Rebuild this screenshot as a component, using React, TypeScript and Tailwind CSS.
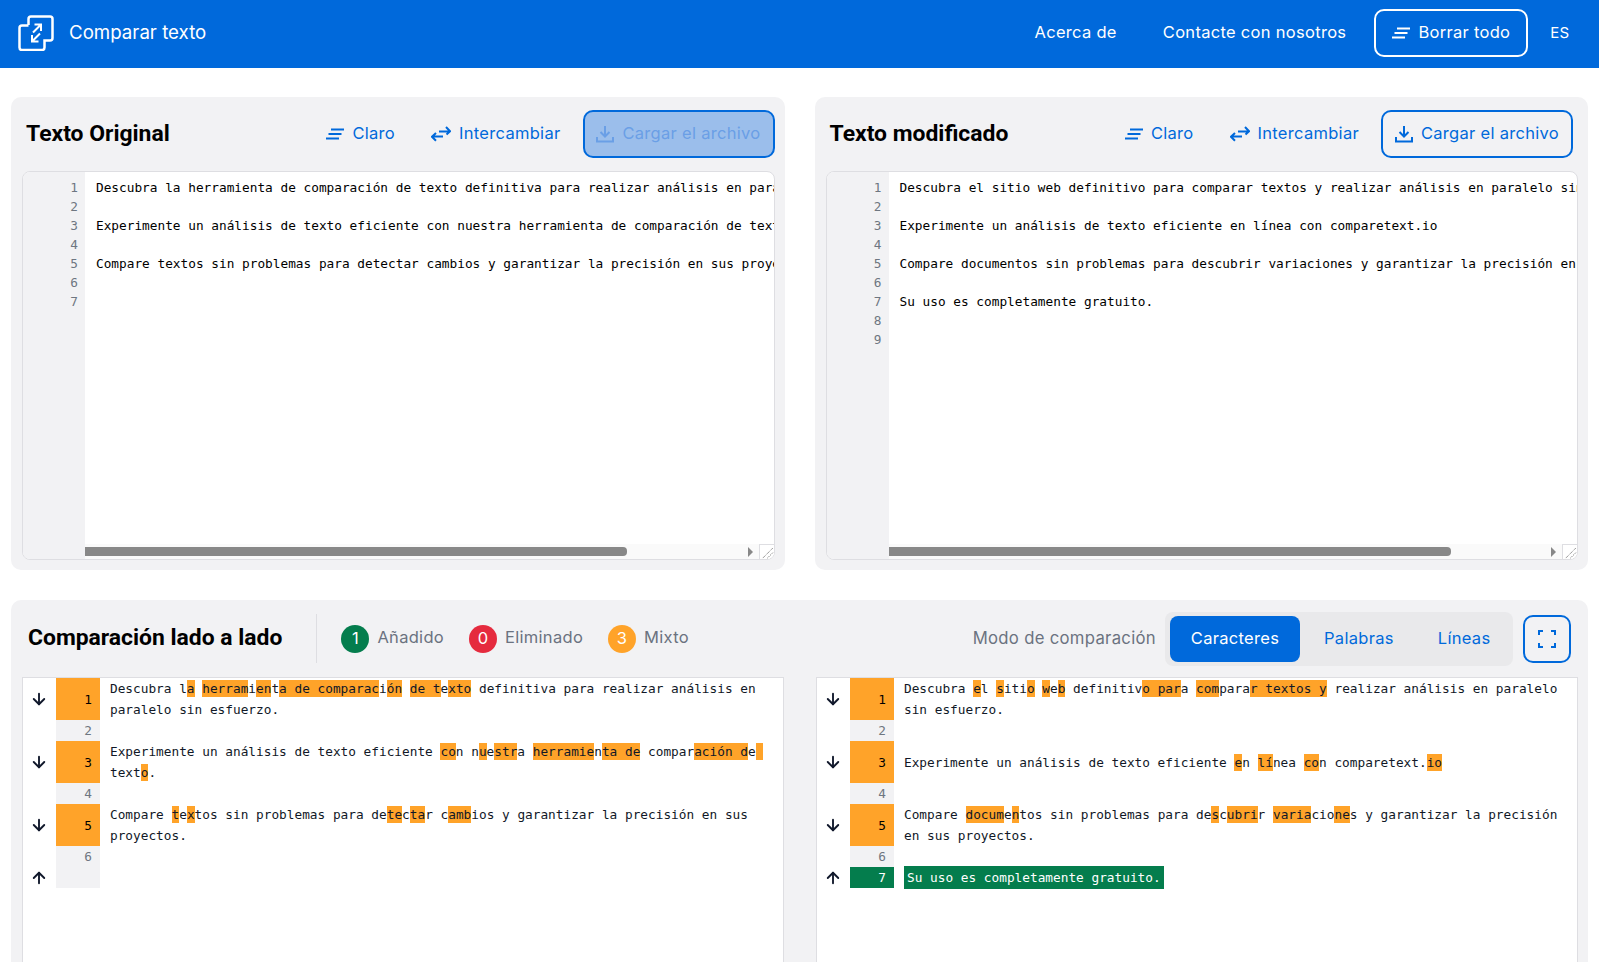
import React from 'react';
import { ArrowDown, ArrowUp } from 'lucide-react';

const mono = "font-['DejaVu_Sans_Mono',monospace]";

function LinesIcon({ className }: { className?: string }) {
  return (
    <svg viewBox="0 0 18 12" className={className} fill="none" stroke="currentColor" strokeWidth="2">
      <path d="M5 1.500h13M2.500 6h13M0 10.500h13" />
    </svg>
  );
}

function SwapIcon({ className }: { className?: string }) {
  return (
    <svg viewBox="0 0 20 16" className={className} fill="none" stroke="currentColor" strokeWidth="2">
      <path d="M8 5.500h11M15 1l4 4.200-3.500 3.300M12 10.500H1.500M5 7l-4 3.800 4 4" />
    </svg>
  );
}

function DownloadIcon({ className }: { className?: string }) {
  return (
    <svg viewBox="0 0 18 18" className={className} fill="none" stroke="currentColor" strokeWidth="2">
      <path d="M9 1v10M4.500 7l4.500 4.500L13.500 7M1 12v4.500h16V12" />
    </svg>
  );
}

function Logo() {
  return (
    <svg viewBox="0 0 36 36" className="w-9 h-9" fill="none" stroke="white" strokeWidth="2.500">
      <path d="M10.500 10V4a2.500 2.500 0 0 1 2.500-2.500h19a2.500 2.500 0 0 1 2.500 2.500v19a2.500 2.500 0 0 1-2.500 2.500h-5.500v7a2.500 2.500 0 0 1-2.500 2.500H4a2.500 2.500 0 0 1-2.500-2.500V13A2.500 2.500 0 0 1 4 10.500h6.500" />
      <path strokeWidth="2" d="M15 17.500L23 9.500M16.500 9.500h6.500v6.500M22 18.500L14 26.500M14 20v6.500h6.500" />
    </svg>
  );
}

function HeaderAction({ icon, label }: { icon: React.ReactNode; label: string }) {
  return (
    <button className="flex items-center gap-2 text-[#0069db] text-[16.500px] tracking-[0.3px] whitespace-nowrap">
      {icon}
      <span className="pb-[2px]">{label}</span>
    </button>
  );
}

function Editor({ lines, thumb }: { lines: string[]; thumb: string }) {
  const total = lines.length;
  return (
    <div className="relative h-[389px] bg-white border border-[#dedee2] rounded-lg overflow-hidden">
      <div className="flex h-full">
        <div className={`w-[62px] shrink-0 bg-[#f2f2f4] pt-[6px] pr-[7px] text-right text-[12.770px] leading-[19px] text-[#6e7681] ${mono}`}>
          {Array.from({ length: total }, (_, i) => (
            <div key={i}>{i + 1}</div>
          ))}
        </div>
        <div className={`flex-1 min-w-0 overflow-hidden pt-[6px] pl-[11px] text-[12.770px] leading-[19px] text-black whitespace-pre ${mono}`}>
          {lines.map((l, i) => (
            <div key={i} className="h-[19px]">{l}</div>
          ))}
        </div>
      </div>
      <div className="absolute left-[62px] right-0 bottom-0 h-[15px] bg-[#fafafa]">
        <div className={`absolute left-0 top-[3px] h-[9px] bg-[#888888] rounded-r-sm ${thumb}`} />
        <div className="absolute right-[21px] top-[3px] w-0 h-0 border-y-[5px] border-y-transparent border-l-[5px] border-l-[#888888]" />
        <div className="absolute right-0 top-0 w-[15px] h-[15px] bg-white border-l border-t border-[#dedee2]">
          <svg viewBox="0 0 15 15" className="w-full h-full" stroke="#555" strokeDasharray="1 1">
            <path d="M3 14L14 3M8 14L14 8" />
          </svg>
        </div>
      </div>
    </div>
  );
}

// [..] marks a highlighted run
function Marked({ text }: { text: string }) {
  const parts = text.split(/(\[[^\]]*\])/);
  return (
    <>
      {parts.map((p, i) =>
        p.startsWith('[') ? (
          <span key={i} className="bg-[#ffa329] py-px">{p.slice(1, -1)}</span>
        ) : (
          <span key={i}>{p}</span>
        )
      )}
    </>
  );
}

type Row = { n?: number; kind: 'mixed' | 'plain' | 'added' | 'empty'; lines: string[]; arrow?: 'down' | 'up' };

function DiffRow({ row }: { row: Row }) {
  const h = row.kind === 'mixed' ? 'h-[42px]' : 'h-[21px]';
  const numCls =
    row.kind === 'mixed'
      ? 'bg-[#ffa329] text-black'
      : row.kind === 'added'
        ? 'bg-[#047d4d] text-white'
        : 'bg-[#f2f2f4] text-[#6e7681]';
  return (
    <div className={`flex ${h}`}>
      <div className="w-[33px] shrink-0 flex items-center justify-center pr-[2px] text-[#10182b]">
        {row.arrow === 'down' && <ArrowDown size={18} strokeWidth={2.500} />}
        {row.arrow === 'up' && <ArrowUp size={18} strokeWidth={2.500} />}
      </div>
      <div className={`w-[44px] shrink-0 flex items-center justify-end pr-[8px] ${numCls}`}>{row.n}</div>
      <div className="flex-1 pl-[10px] flex flex-col justify-center whitespace-pre text-[#111827]">
        {row.kind === 'added' ? (
          <div><span className="bg-[#047d4d] text-white px-[3px] py-[4px]">{row.lines[0]}</span></div>
        ) : (
          row.lines.map((l, i) => (
            <div key={i} className="h-[21px]"><Marked text={l} /></div>
          ))
        )}
      </div>
    </div>
  );
}

function DiffPane({ rows }: { rows: Row[] }) {
  return (
    <div className={`flex-1 min-w-0 bg-white border-x border-t border-[#dedee2] h-[300px] text-[12.770px] leading-[21px] ${mono}`}>
      {rows.map((r, i) => (
        <DiffRow key={i} row={r} />
      ))}
    </div>
  );
}

const leftRows: Row[] = [
  { n: 1, kind: 'mixed', arrow: 'down', lines: ['Descubra l[a] [herram]i[en]t[a de comparac]i[ón] [de t]e[xto] definitiva para realizar análisis en', 'paralelo sin esfuerzo.'] },
  { n: 2, kind: 'plain', lines: [''] },
  { n: 3, kind: 'mixed', arrow: 'down', lines: ['Experimente un análisis de texto eficiente [co]n n[u]e[str]a [herramie]n[ta de] compar[ación d]e[ ]', 'text[o].'] },
  { n: 4, kind: 'plain', lines: [''] },
  { n: 5, kind: 'mixed', arrow: 'down', lines: ['Compare [t]e[x]tos sin problemas para de[te]c[ta]r c[amb]ios y garantizar la precisión en sus', 'proyectos.'] },
  { n: 6, kind: 'plain', lines: [''] },
  { kind: 'empty', arrow: 'up', lines: [''] },
];

const rightRows: Row[] = [
  { n: 1, kind: 'mixed', arrow: 'down', lines: ['Descubra [e]l [s]iti[o] [w]e[b] definitiv[o par]a [com]para[r textos y] realizar análisis en paralelo', 'sin esfuerzo.'] },
  { n: 2, kind: 'plain', lines: [''] },
  { n: 3, kind: 'mixed', arrow: 'down', lines: ['Experimente un análisis de texto eficiente [e]n [lí]nea [co]n comparetext.[io]'] },
  { n: 4, kind: 'plain', lines: [''] },
  { n: 5, kind: 'mixed', arrow: 'down', lines: ['Compare [docum]e[n]tos sin problemas para de[s]c[ubri]r [varia]cio[ne]s y garantizar la precisión', 'en sus proyectos.'] },
  { n: 6, kind: 'plain', lines: [''] },
  { n: 7, kind: 'added', arrow: 'up', lines: ['Su uso es completamente gratuito.'] },
];

const originalLines = [
  'Descubra la herramienta de comparación de texto definitiva para realizar análisis en paralelo sin esfuerzo.',
  '',
  'Experimente un análisis de texto eficiente con nuestra herramienta de comparación de texto.',
  '',
  'Compare textos sin problemas para detectar cambios y garantizar la precisión en sus proyectos.',
  '',
  '',
];

const modifiedLines = [
  'Descubra el sitio web definitivo para comparar textos y realizar análisis en paralelo sin esfuerzo.',
  '',
  'Experimente un análisis de texto eficiente en línea con comparetext.io',
  '',
  'Compare documentos sin problemas para descubrir variaciones y garantizar la precisión en sus proyectos.',
  '',
  'Su uso es completamente gratuito.',
  '',
  '',
];

export default function App() {
  return (
    <div className="h-[962px] overflow-hidden bg-white font-['Inter',sans-serif]">
      {/* Header */}
      <header className="h-[68px] bg-[#0069db] flex items-center pl-[18px] pr-[30px] pb-[2px] text-white">
        <Logo />
        <span className="ml-[15px] text-[18.700px]">Comparar texto</span>
        <nav className="ml-auto flex items-center text-[16.500px] tracking-[0.3px]">
          <a className="mr-[46px] pb-[2px]">Acerca de</a>
          <a className="mr-[28px] pb-[2px]">Contacte con nosotros</a>
          <button className="h-[48px] w-[154px] border-2 border-white rounded-[10px] flex items-center justify-center gap-2">
            <LinesIcon className="w-[18px] h-[12px]" />
            <span className="pb-[2px]">Borrar todo</span>
          </button>
          <span className="ml-[22px] text-[15px] tracking-normal">ES</span>
        </nav>
      </header>

      <div className="px-[11px]">
        {/* Editors */}
        <div className="flex gap-[30px] mt-[29px]">
          <section className="flex-1 min-w-0 h-[473px] bg-[#f2f2f4] rounded-[10px] pl-[11px] pr-[10px]">
            <div className="h-[74px] flex items-center">
              <h2 className="ml-[4px] font-['Roboto',sans-serif] font-bold text-[22.900px] text-black">Texto Original</h2>
              <div className="ml-auto flex items-center">
                <HeaderAction icon={<LinesIcon className="w-[18px] h-[12px]" />} label="Claro" />
                <div className="w-[36px]" />
                <HeaderAction icon={<SwapIcon className="w-[20px] h-[16px]" />} label="Intercambiar" />
                <button className="ml-[22px] h-[48px] w-[192px] border-2 border-[#0069db] bg-[#9bbeeb] rounded-[10px] flex items-center justify-center gap-2 text-[16.500px] tracking-[0.3px] whitespace-nowrap text-[#6a9fe6]">
                  <DownloadIcon className="w-[18px] h-[18px]" />
                  <span className="pb-[2px]">Cargar el archivo</span>
                </button>
              </div>
            </div>
            <Editor lines={originalLines} thumb="w-[542px]" />
          </section>
          <section className="flex-1 min-w-0 h-[473px] bg-[#f2f2f4] rounded-[10px] pl-[11px] pr-[10px]">
            <div className="h-[74px] flex items-center pr-[5px]">
              <h2 className="ml-[4px] font-['Roboto',sans-serif] font-bold text-[22.900px] text-black">Texto modificado</h2>
              <div className="ml-auto flex items-center">
                <HeaderAction icon={<LinesIcon className="w-[18px] h-[12px]" />} label="Claro" />
                <div className="w-[36px]" />
                <HeaderAction icon={<SwapIcon className="w-[20px] h-[16px]" />} label="Intercambiar" />
                <button className="ml-[22px] h-[48px] w-[192px] border-2 border-[#0069db] rounded-[10px] flex items-center justify-center gap-2 text-[16.500px] tracking-[0.3px] whitespace-nowrap text-[#0069db]">
                  <DownloadIcon className="w-[18px] h-[18px]" />
                  <span className="pb-[2px]">Cargar el archivo</span>
                </button>
              </div>
            </div>
            <Editor lines={modifiedLines} thumb="w-[562px]" />
          </section>
        </div>

        {/* Side by side */}
        <section className="mt-[30px] h-[400px] bg-[#f2f2f4] rounded-t-[10px] pl-[11px] pr-[10px]">
          <div className="h-[77px] flex items-center">
            <h2 className="ml-[6px] font-['Roboto',sans-serif] font-bold text-[22.900px] text-black">Comparación lado a lado</h2>
            <div className="ml-[34px] w-px h-[49px] bg-[#dedee2]" />
            <div className="ml-[24px] flex items-center gap-[25px] text-[16.500px] tracking-[0.3px] text-[#6b7280]">
              <div className="flex items-center gap-[8px]">
                <span className="w-[28px] h-[28px] rounded-full bg-[#047d4d] text-white flex items-center justify-center">1</span>
                <span className="pb-[2px]">Añadido</span>
              </div>
              <div className="flex items-center gap-[8px]">
                <span className="w-[28px] h-[28px] rounded-full bg-[#e52b3e] text-white flex items-center justify-center">0</span>
                <span className="pb-[2px]">Eliminado</span>
              </div>
              <div className="flex items-center gap-[8px]">
                <span className="w-[28px] h-[28px] rounded-full bg-[#ffa329] text-white flex items-center justify-center">3</span>
                <span className="pb-[2px]">Mixto</span>
              </div>
            </div>
            <div className="ml-auto flex items-center">
              <span className="text-[16.700px] tracking-[0.3px] text-[#6b7280] mr-[9px]">Modo de comparación</span>
              <div className="h-[54px] w-[348px] bg-[#e9e9eb] rounded-[8px] flex items-center pl-[5px] text-[16.500px] tracking-[0.3px] text-[#0069db]">
                <button className="h-[46px] w-[130px] bg-[#0069db] text-white rounded-[8px]">Caracteres</button>
                <span className="ml-[24px]">Palabras</span>
                <span className="ml-[44px]">Líneas</span>
              </div>
              <button className="ml-[10px] w-[48px] h-[48px] mr-[7px] border-2 border-[#0069db] rounded-[10px] flex items-center justify-center text-[#0069db]">
                <svg viewBox="0 0 18 18" className="w-[18px] h-[18px]" fill="none" stroke="currentColor" strokeWidth="2">
                  <path d="M1 5V1h4M13 1h4v4M17 13v4h-4M5 17H1v-4" />
                </svg>
              </button>
            </div>
          </div>
          <div className="flex gap-[32px]">
            <DiffPane rows={leftRows} />
            <DiffPane rows={rightRows} />
          </div>
        </section>
      </div>
    </div>
  );
}
